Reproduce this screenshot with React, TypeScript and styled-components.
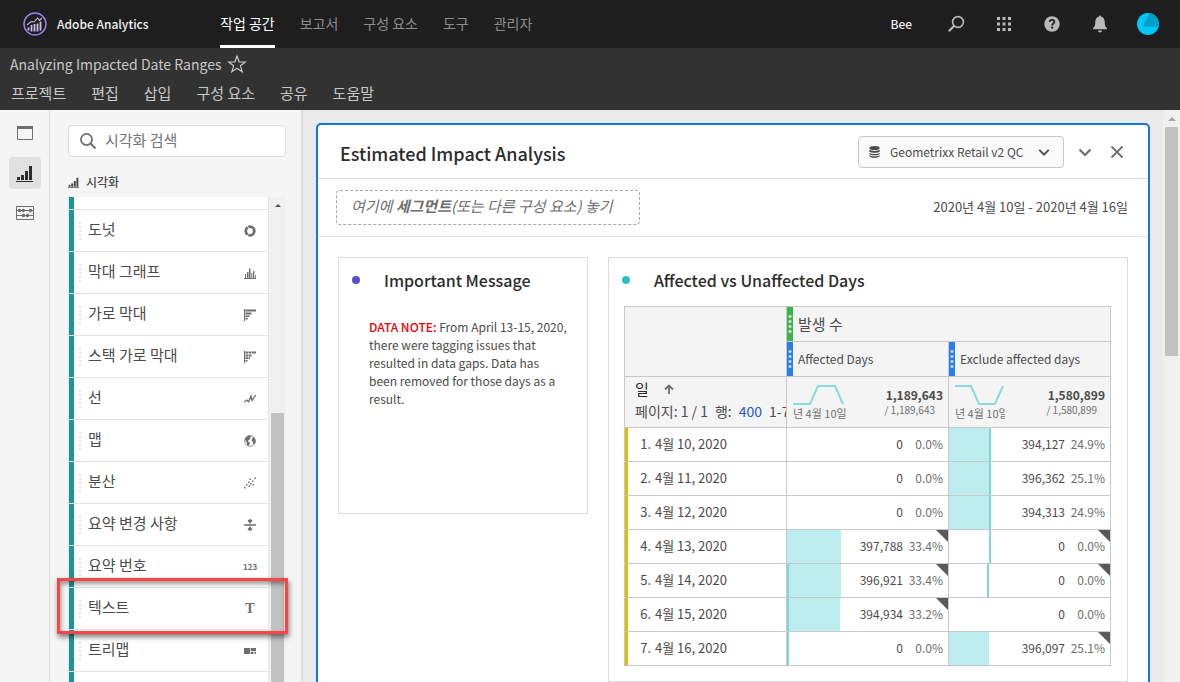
import React from "react";
import styled, { createGlobalStyle, css } from "styled-components";

const Global = createGlobalStyle`
  *, *::before, *::after { box-sizing: border-box; }
  body {
    margin: 0;
    background: #eaeaea;
    color: #4b4b4b;
    font-family: "Noto Sans CJK KR", "Noto Sans", sans-serif;
    font-size: 13px;
    line-height: 18px;
  }
  button, input, select { font: inherit; color: inherit; }
  button { border: 0; padding: 0; background: none; cursor: pointer; }
  h1, h2, h3, p, ul { margin: 0; padding: 0; }
  ul { list-style: none; }
  a { color: inherit; text-decoration: none; }
  svg { display: block; }
`;

const Page = styled.div`
  display: flex;
  flex-direction: column;
  height: 100vh;
  overflow: hidden;
`;

/* ---------- global header ---------- */
const TopBar = styled.header`
  display: flex;
  align-items: center;
  flex: none;
  height: 48px;
  padding: 0 8px 0 22px;
  background: #1e1e1e;
  color: #fff;
`;
const Brand = styled.a`
  display: flex;
  align-items: center;
  gap: 9px;
  width: 198px;
  font-size: 12px;
  font-weight: 500;
  color: #f0f0f0;
`;
const TopNav = styled.nav`
  display: flex;
  flex: 1;
  gap: 25px;
  align-self: stretch;
`;
const TopLink = styled.a<{ $active?: boolean }>`
  display: flex;
  align-items: center;
  padding-top: 1px;
  font-size: 14px;
  border-bottom: 3px solid ${(p) => (p.$active ? "#fff" : "transparent")};
  color: ${(p) => (p.$active ? "#fff" : "#8e8e8e")};
`;
const UserName = styled.span`
  margin-right: 20px;
  font-size: 12px;
  font-weight: 500;
  color: #f0f0f0;
`;
const TopButton = styled.button`
  display: grid;
  place-items: center;
  width: 48px;
  height: 48px;
  color: #b9b9b9;
`;

/* ---------- project bar ---------- */
const ProjectBar = styled.div`
  flex: none;
  height: 62px;
  background: #323232;
  color: #c8c8c8;
`;
const ProjectTitleRow = styled.div`
  display: flex;
  align-items: center;
  gap: 6px;
  height: 32px;
  padding-left: 10px;
`;
const ProjectTitle = styled.h1`
  font-size: 14px;
  font-weight: 400;
`;
const MenuBar = styled.nav`
  display: flex;
  align-items: center;
  gap: 25px;
  height: 26px;
  padding-left: 11px;
`;
const MenuButton = styled.button`
  font-size: 15px;
  line-height: 22px;
`;

/* ---------- body ---------- */
const Body = styled.div`
  display: flex;
  flex: 1;
  min-height: 0;
`;
const Rail = styled.nav`
  display: flex;
  flex: none;
  flex-direction: column;
  align-items: center;
  gap: 8px;
  width: 50px;
  padding-top: 7px;
  background: #f5f5f5;
  border-right: 1px solid #dcdcdc;
`;
const RailButton = styled.button<{ $active?: boolean }>`
  display: grid;
  place-items: center;
  width: 32px;
  height: 32px;
  border-radius: 4px;
  color: ${(p) => (p.$active ? "#2c2c2c" : "#6e6e6e")};
  background: ${(p) => (p.$active ? "#e1e1e1" : "transparent")};
`;
const SidePanel = styled.aside`
  flex: none;
  width: 253px;
  padding: 15px 15px 0 18px;
  background: #f5f5f5;
  border-right: 2px solid #dfdfdf;
`;
const SearchBox = styled.label`
  display: flex;
  align-items: center;
  gap: 8px;
  height: 32px;
  padding-left: 10px;
  background: #fff;
  border: 1px solid #dcdcdc;
  border-radius: 4px;
  color: #6e6e6e;
`;
const SearchInput = styled.input`
  flex: 1;
  min-width: 0;
  padding: 0 0 2px;
  border: 0;
  outline: 0;
  background: transparent;
  font-size: 15px;
  line-height: 22px;
  &::placeholder { color: #757575; opacity: 1; }
`;
const PanelHeading = styled.h2`
  display: flex;
  align-items: center;
  gap: 7px;
  height: 40px;
  padding-top: 10px;
  font-size: 12px;
  font-weight: 500;
`;
const ListArea = styled.div`
  display: flex;
  height: 100%;
  border-left: 1px solid #e6e6e6;
`;
const List = styled.ul`
  flex: 1;
  background: #fff;
  border-right: 1px solid #e6e6e6;
`;
const Item = styled.li<{ $partial?: boolean }>`
  position: relative;
  display: flex;
  align-items: center;
  height: ${(p) => (p.$partial ? 13 : 42)}px;
  padding: 0 11px 0 10px;
  border-bottom: 1px solid #e4e4e4;
  background: linear-gradient(#1b959a, #1b959a) 0 0 / 5px 100% no-repeat padding-box;
`;
const Grip = styled.span`
  width: 2px;
  height: 18px;
  margin-right: 7px;
  background: repeating-linear-gradient(#e1e1e1 0 2px, transparent 2px 4px);
`;
const ItemName = styled.span`
  flex: 1;
  padding-bottom: 4px;
  font-size: 15px;
  line-height: 22px;
`;
const ItemIcon = styled.span`
  display: grid;
  place-items: center;
  width: 14px;
  height: 14px;
  color: #6e6e6e;
`;
const Highlight = styled.span`
  position: absolute;
  z-index: 2;
  inset: -10px -20px -5px -12px;
  border: 3px solid #fb4444;
  box-shadow: 1px 3px 5px rgba(0, 0, 0, 0.5), inset 1px 3px 5px rgba(0, 0, 0, 0.4);
  pointer-events: none;
`;
const Scrollbar = styled.div<{ $gap: number }>`
  display: flex;
  flex: none;
  flex-direction: column;
  align-items: center;
  gap: ${(p) => p.$gap}px;
  width: 17px;
  padding-top: 7px;
  background: #f0f0f0;
  color: ${(p) => (p.$gap > 10 ? "#505050" : "#a3a3a3")};
`;
const Thumb = styled.div<{ $size: number }>`
  width: 13px;
  height: ${(p) => p.$size}px;
  background: #c1c1c1;
`;

/* ---------- canvas ---------- */
const Canvas = styled.main`
  flex: 1;
  min-width: 0;
  padding: 13px 13px 0;
  background: #eaeaea;
`;
const Panel = styled.section`
  min-height: 100%;
  background: #fff;
  border: 2px solid #1473e6;
  border-radius: 5px;
`;
const PanelHeader = styled.div`
  display: flex;
  align-items: center;
  height: 54px;
  padding: 0 24px 0 22px;
  border-bottom: 1px solid #dcdcdc;
`;
const PanelTitle = styled.h2`
  flex: 1;
  padding-top: 2px;
  font-size: 18px;
  font-weight: 500;
  color: #2c2c2c;
`;
const SuitePicker = styled.label`
  display: flex;
  align-items: center;
  gap: 10px;
  height: 32px;
  padding: 0 13px 0 10px;
  border: 1px solid #c8c8c8;
  border-radius: 4px;
  background: #fafafa;
`;
const SuiteSelect = styled.select`
  width: 138px;
  padding: 0;
  border: 0;
  outline: 0;
  appearance: none;
  background: transparent;
  font-size: 12px;
`;
const PanelTools = styled.div`
  display: flex;
  gap: 18px;
  margin-left: 14px;
`;
const ToolButton = styled.button`
  color: #6e6e6e;
`;
const FilterRow = styled.div`
  display: flex;
  align-items: center;
  justify-content: space-between;
  height: 58px;
  padding: 0 20px 0 18px;
  border-bottom: 1px solid #e4e4e4;
`;
const DropZone = styled.div`
  width: 304px;
  height: 35px;
  padding: 4px 14px;
  border: 1px dashed #a8a8a8;
  border-radius: 4px;
  font-size: 15px;
  line-height: 22px;
  font-style: italic;
  white-space: nowrap;
  color: #6e6e6e;
`;
const DateRange = styled.button`
  padding-bottom: 2px;
`;
const Boards = styled.div`
  display: flex;
  align-items: flex-start;
  gap: 20px;
  padding: 20px;
`;
const Board = styled.article<{ $wide?: boolean }>`
  ${(p) =>
    p.$wide
      ? css`flex: 1; min-width: 0;`
      : css`flex: none; width: 250px; min-height: 257px;`}
  border: 1px solid #dcdcdc;
`;
const BoardTitle = styled.h3<{ $dot: string }>`
  display: flex;
  align-items: center;
  gap: 24px;
  height: 48px;
  padding: 0 0 4px 13px;
  font-size: 16px;
  font-weight: 500;
  color: #2c2c2c;
  &::before {
    content: "";
    width: 8px;
    height: 8px;
    border-radius: 50%;
    background: ${(p) => p.$dot};
  }
`;
const TableArea = styled.div`
  padding: 0 16px 15px 15px;
`;
const Note = styled.p`
  padding: 12px 18px 0 30px;
  font-size: 12px;
`;
const NoteFlag = styled.strong`
  font-weight: 500;
  color: #f00000;
`;

/* ---------- data table ---------- */
const line = "1px solid #c8c8c8";
const Table = styled.table`
  width: 100%;
  table-layout: fixed;
  border-collapse: separate;
  border-spacing: 0;
  border-top: ${line};
  border-left: ${line};
`;
const cell = css`
  padding: 0;
  border-right: ${line};
  border-bottom: ${line};
  font-weight: 400;
  text-align: left;
`;
const HeadCell = styled.th<{ $tall?: boolean }>`
  ${cell}
  height: ${(p) => (p.$tall ? 51 : 35)}px;
  background: #f4f4f4;
`;
const HeadLabel = styled.div<{ $bar: string; $large?: boolean }>`
  display: flex;
  align-items: center;
  gap: 5px;
  height: 34px;
  font-size: ${(p) => (p.$large ? 15 : 12)}px;
  &::before {
    content: "";
    width: 6px;
    height: 100%;
    background:
      radial-gradient(circle, rgba(255, 255, 255, 0.7) 1px, transparent 2px) 1px 0 / 4px 5px repeat-y content-box,
      ${(p) => p.$bar};
    padding: 7px 0;
  }
`;
const Dimension = styled.div`
  height: 50px;
  padding: 1px 0 0 10px;
  overflow: hidden;
  white-space: nowrap;
`;
const DimensionName = styled.div`
  display: flex;
  align-items: center;
  gap: 15px;
  font-size: 15px;
  line-height: 22px;
  color: #2c2c2c;
`;
const Paging = styled.div`
  display: flex;
  gap: 7px;
  font-size: 14px;
  line-height: 22px;
`;
const RowCount = styled.a`
  color: #2558c8;
`;
const Summary = styled.div`
  display: flex;
  justify-content: space-between;
  padding: 5px 5px 0 6px;
  height: 50px;
`;
const Trend = styled.div<{ $width: number }>`
  width: ${(p) => p.$width}px;
  overflow: hidden;
  white-space: nowrap;
  font-size: 11px;
  line-height: 16px;
  color: #6e6e6e;
`;
const Totals = styled.div`
  padding-top: 5px;
  text-align: right;
  font-size: 12px;
  line-height: 15px;
`;
const GrandTotal = styled.div`
  padding-right: 8px;
  font-size: 10px;
  color: #6e6e6e;
`;
const RowHead = styled.th`
  ${cell}
  height: 34px;
`;
const RowLabel = styled.div`
  display: flex;
  align-items: center;
  gap: 4px;
  height: 33px;
  padding-bottom: 2px;
  border-left: 3px solid #dcbf00;
`;
const RowIndex = styled.span`
  width: 23px;
  text-align: right;
`;
const DataCell = styled.td`
  ${cell}
  height: 34px;
`;
const Metric = styled.div`
  position: relative;
  display: flex;
  align-items: center;
  justify-content: flex-end;
  height: 33px;
  padding: 0 5px 2px 0;
  font-size: 12px;
`;
const Fill = styled.span`
  position: absolute;
  inset: 0 auto 0 0;
  background: #bdecee;
`;
const Marker = styled.span`
  position: absolute;
  top: 0;
  bottom: 0;
  width: 2px;
  background: #7dd6da;
`;
const Corner = styled.span`
  position: absolute;
  top: 0;
  right: 0;
  border: 6px solid transparent;
  border-top-color: #5a5a5a;
  border-right-color: #5a5a5a;
`;
const Percent = styled.span`
  width: 40px;
  text-align: right;
  color: #6e6e6e;
`;

/* ---------- icons ---------- */
const Logo = () => (
  <svg width="26" height="26" viewBox="0 0 26 26" fill="none" aria-hidden="true">
    <circle cx="13" cy="13" r="11" stroke="#9a7ff0" strokeWidth="1.5" />
    <path d="M6.500 16.500v3M9.500 14v6.500M12.500 13v7.500M15.500 12.500v8M18.500 10.500v9" stroke="#c9bde8" strokeWidth="1.800" />
    <path d="M5 14l4-3.500 3 .5 3.500-4 2 2.500L20 7" stroke="#c9bde8" strokeWidth="1.100" />
  </svg>
);
const Magnifier = ({ flip }: { flip?: boolean }) => (
  <svg width="18" height="18" viewBox="0 0 18 18" fill="none" stroke="currentColor" aria-hidden="true">
    {flip ? (
      <>
        <circle cx="11" cy="7" r="5.400" strokeWidth="1.600" />
        <path d="M7.300 10.700L1.800 16.200" strokeWidth="2.200" />
      </>
    ) : (
      <>
        <circle cx="7.500" cy="7.500" r="5.600" strokeWidth="1.700" />
        <path d="M11.500 11.500l5 5" strokeWidth="2" />
      </>
    )}
  </svg>
);
const Apps = () => (
  <svg width="14" height="14" viewBox="0 0 14 14" fill="currentColor" aria-hidden="true">
    {[0, 5.5, 11].map((y) => [0, 5.5, 11].map((x) => <rect key={`${x}-${y}`} x={x} y={y} width="3" height="3" />))}
  </svg>
);
const Help = () => (
  <svg width="16" height="16" viewBox="0 0 16 16" aria-hidden="true">
    <circle cx="8" cy="8" r="7.700" fill="currentColor" />
    <path d="M5.600 5.800C5.800 4.500 6.700 3.900 8 3.900c1.500 0 2.400.8 2.400 1.900 0 1.700-2.200 1.800-2.200 3.600" fill="none" stroke="#1e1e1e" strokeWidth="1.800" />
    <rect x="7.200" y="10.600" width="2" height="2" fill="#1e1e1e" />
  </svg>
);
const Bell = () => (
  <svg width="16" height="18" viewBox="0 0 16 18" fill="currentColor" aria-hidden="true">
    <path d="M7 1.500a1 1 0 0 1 2 0c2.500.6 3.700 2.700 3.700 5.200 0 3.800.8 5.300 2.300 6.300v1.200H1V13c1.500-1 2.300-2.500 2.300-6.300C3.300 4.200 4.500 2.100 7 1.500zM6 15.500h4a2 2 0 0 1-4 0z" />
  </svg>
);
const Avatar = () => (
  <svg width="22" height="22" viewBox="0 0 22 22" aria-hidden="true">
    <circle cx="11" cy="11" r="11" fill="#00c8fa" />
    <path d="M12 0.500A11 11 0 0 1 21.500 14L6 13.500z" fill="#00a0cc" />
  </svg>
);
const Star = () => (
  <svg width="20" height="20" viewBox="0 0 20 20" fill="none" stroke="currentColor" strokeWidth="1.200" aria-hidden="true">
    <path d="M10 2l2.100 5.800 6.200.2-4.900 3.800 1.800 6L10 14.300l-5.200 3.500 1.800-6L1.700 8l6.200-.2z" />
  </svg>
);
const WindowIcon = () => (
  <svg width="16" height="14" viewBox="0 0 16 14" aria-hidden="true">
    <path d="M.5.500h15v13H.5z" fill="none" stroke="currentColor" />
    <path d="M0 0h16v3H0z" fill="currentColor" />
  </svg>
);
const ChartIcon = ({ size = 17 }: { size?: number }) => (
  <svg width={size} height={size} viewBox="0 0 17 17" fill="currentColor" aria-hidden="true">
    <path d="M0 16h17v1H0zM1 12h3v3H1zM5 10h3v5H5zM9 6h3v9H9zM13 1h3v14h-3z" />
  </svg>
);
const Abacus = () => (
  <svg width="18" height="14" viewBox="0 0 18 14" fill="none" stroke="currentColor" aria-hidden="true">
    <path d="M.5.500h17v13H.5zM0 4.500h18M0 9.500h18" />
    <g fill="currentColor" stroke="none">
      <circle cx="3.500" cy="4.500" r="1.800" />
      <circle cx="7.300" cy="4.500" r="1.800" />
      <circle cx="14.500" cy="4.500" r="1.800" />
      <circle cx="7.500" cy="9.500" r="1.800" />
      <circle cx="11.500" cy="9.500" r="1.800" />
    </g>
  </svg>
);
const Database = () => (
  <svg width="11" height="12" viewBox="0 0 11 12" fill="currentColor" aria-hidden="true">
    <ellipse cx="5.500" cy="2" rx="5.200" ry="2" />
    <path d="M.2 3.800c2 1.500 8.600 1.500 10.600 0v1.500c-1 2-9.600 2-10.600 0zM.2 6.900c2 1.500 8.600 1.500 10.600 0v.9c-1 2-9.600 2-10.600 0zM.2 9.200c2 1.500 8.600 1.500 10.600 0v.8c-1 2.400-9.600 2.400-10.600 0z" />
  </svg>
);
const Chevron = ({ width = 14 }: { width?: number }) => (
  <svg width={width} height={width} viewBox="0 0 14 14" fill="none" stroke="currentColor" strokeWidth="2.200" aria-hidden="true">
    <path d="M1.500 4.500L7 10l5.500-5.500" />
  </svg>
);
const Close = () => (
  <svg width="14" height="14" viewBox="0 0 14 14" fill="none" stroke="currentColor" strokeWidth="1.800" aria-hidden="true">
    <path d="M1.500 1.500l11 11M12.500 1.500l-11 11" />
  </svg>
);
const ArrowUp = () => (
  <svg width="10" height="10" viewBox="0 0 10 10" fill="none" stroke="#6e6e6e" strokeWidth="1.800" aria-hidden="true">
    <path d="M5 10V1.500M1 5.500l4-4 4 4" />
  </svg>
);
const Triangle = () => (
  <svg width="8" height="4" viewBox="0 0 8 4" fill="currentColor" aria-hidden="true">
    <path d="M0 4l4-4 4 4z" />
  </svg>
);

const shapes: Record<string, React.ReactNode> = {
  donut: <circle cx="6" cy="6" r="4.300" fill="none" stroke="currentColor" strokeWidth="2.800" strokeDasharray="8.300 .7" />,
  bars: <path d="M1 11V7h1v4zM3 11V5h1.500v6zM5 11V1.500h1.500V11zM7.300 11V6h1v5zM9 11V4h1.300v7zM11 11V8h.8v3zM0 11h12v1H0z" />,
  hbars: <path d="M0 0h1.200v12H0zM1.600.500H12v2H1.600zM1.600 3.500H7.500v2H1.600zM1.600 6.500h4v1.500h-4zM1.600 9h2.200v1.500H1.600z" />,
  stacked: <path d="M0 0h1.200v12H0zM1.600.500H4v2H1.600zM4.500.500H7v2H4.500zM7.500.500H12v2H7.500zM1.600 3.500H4v2H1.600zM4.500 3.500H7.500v2H4.500zM1.600 6.300H4v1.800H1.600zM4.500 6.300h1.600v1.800H4.500zM1.600 9h2v1.500h-2z" />,
  line: <path d="M.3 9l2.500-2 1.800 1.800L7 3l1 4.500L11.700 2" fill="none" stroke="currentColor" strokeWidth="1.300" />,
  map: (
    <>
      <circle cx="6" cy="6" r="5.400" fill="none" stroke="currentColor" strokeWidth=".7" />
      <path d="M.8 4.500C1.500 2 3.500.700 6 .600L7.500 1.500 6 2.500 6.500 4 4.500 5 4 6.500 6 7.500 5.500 9 4.500 11 3 10 2.800 7.500zM8.500 2.500L10 2.200 11.400 5v2.500L10 9.800 9 8.500V7L7.500 6 8 4.300z" />
    </>
  ),
  scatter: <path d="M0 10h1.500v1.500H0zM2 7h1.500v1.500H2zM4.500 8.500H6V10H4.500zM4 4.500h1.500V6H4zM6 6h1.500v1.500H6zM8 3.500h1.500V5H8zM10.500.500H12V2h-1.500zM5.500 1.500H7V3H5.500zM8.500 7H10v1.500H8.500z" />,
  change: <path d="M0 5.300h12v1.500H0zM5.300 3h1.500v1.500H5.300zM6 0l2.200 1.200v1L6.800 3.500H5.200L3.800 2.200v-1zM5.300 7.500h1.500V9H5.300zM3.800 9.700l1.400-1.200h1.600l1.400 1.200v1L6 12l-2.200-1.300z" />,
  treemap: <path d="M0 3h6v6H0zM6.700 3H12v3.300H6.700zM6.700 7H9v2H6.700zM9.600 7h.9v2h-.9zM11.100 7h.9v2h-.9z" />,
};
const Glyph = ({ name }: { name: string }) => (
  <svg width="12" height="12" viewBox="0 0 12 12" fill="currentColor" aria-hidden="true">
    {shapes[name]}
  </svg>
);
const NumberGlyph = styled.span`
  font-size: 8px;
  font-weight: 700;
  line-height: 10px;
`;
const LetterGlyph = styled.span`
  font-family: "Liberation Serif", serif;
  font-size: 14px;
  font-weight: 700;
  line-height: 14px;
`;

/* ---------- data ---------- */
const items: { name: string; icon: React.ReactNode; marked?: boolean }[] = [
  { name: "도넛", icon: <Glyph name="donut" /> },
  { name: "막대 그래프", icon: <Glyph name="bars" /> },
  { name: "가로 막대", icon: <Glyph name="hbars" /> },
  { name: "스택 가로 막대", icon: <Glyph name="stacked" /> },
  { name: "선", icon: <Glyph name="line" /> },
  { name: "맵", icon: <Glyph name="map" /> },
  { name: "분산", icon: <Glyph name="scatter" /> },
  { name: "요약 변경 사항", icon: <Glyph name="change" /> },
  { name: "요약 번호", icon: <NumberGlyph>123</NumberGlyph> },
  { name: "텍스트", icon: <LetterGlyph>T</LetterGlyph>, marked: true },
  { name: "트리맵", icon: <Glyph name="treemap" /> },
];

type Value = { value: string; percent: string; fill?: number; marker?: number; flagged?: boolean };
const none = { value: "0", percent: "0.0%" };
const rows: { day: string; cells: Value[] }[] = [
  { day: "4월 10, 2020", cells: [none, { value: "394,127", percent: "24.9%", fill: 41, marker: 40 }] },
  { day: "4월 11, 2020", cells: [none, { value: "396,362", percent: "25.1%", fill: 41, marker: 40 }] },
  { day: "4월 12, 2020", cells: [none, { value: "394,313", percent: "24.9%", fill: 41, marker: 40 }] },
  { day: "4월 13, 2020", cells: [{ value: "397,788", percent: "33.4%", fill: 54, flagged: true }, { ...none, marker: 40, flagged: true }] },
  { day: "4월 14, 2020", cells: [{ value: "396,921", percent: "33.4%", fill: 54, marker: 0, flagged: true }, { ...none, marker: 38, flagged: true }] },
  { day: "4월 15, 2020", cells: [{ value: "394,934", percent: "33.2%", fill: 53, marker: 0, flagged: true }, none] },
  { day: "4월 16, 2020", cells: [{ ...none, marker: 0 }, { value: "396,097", percent: "25.1%", fill: 40, flagged: true }] },
];

const MetricSummary = ({ path, total, width }: { path: string; total: string; width: number }) => (
  <Summary>
    <Trend $width={width}>
      <svg width="52" height="23" viewBox="0 0 52 23" fill="none" stroke="#8adada" strokeWidth="2" aria-hidden="true">
        <path d={path} />
      </svg>
      년 4월 10일
    </Trend>
    <Totals>
      <strong>{total}</strong>
      <GrandTotal>/ {total}</GrandTotal>
    </Totals>
  </Summary>
);

export default function App() {
  return (
    <>
      <Global />
      <Page>
        <TopBar>
          <Brand href="#home"><Logo />Adobe Analytics</Brand>
          <TopNav>
            <TopLink href="#workspace" $active>작업 공간</TopLink>
            <TopLink href="#reports">보고서</TopLink>
            <TopLink href="#components">구성 요소</TopLink>
            <TopLink href="#tools">도구</TopLink>
            <TopLink href="#admin">관리자</TopLink>
          </TopNav>
          <UserName>Bee</UserName>
          <TopButton aria-label="검색"><Magnifier flip /></TopButton>
          <TopButton aria-label="앱"><Apps /></TopButton>
          <TopButton aria-label="도움말"><Help /></TopButton>
          <TopButton aria-label="알림"><Bell /></TopButton>
          <TopButton aria-label="계정"><Avatar /></TopButton>
        </TopBar>

        <ProjectBar>
          <ProjectTitleRow>
            <ProjectTitle>Analyzing Impacted Date Ranges</ProjectTitle>
            <button aria-label="즐겨찾기"><Star /></button>
          </ProjectTitleRow>
          <MenuBar>
            {["프로젝트", "편집", "삽입", "구성 요소", "공유", "도움말"].map((m) => (
              <MenuButton key={m}>{m}</MenuButton>
            ))}
          </MenuBar>
        </ProjectBar>

        <Body>
          <Rail>
            <RailButton aria-label="패널"><WindowIcon /></RailButton>
            <RailButton aria-label="시각화" $active><ChartIcon /></RailButton>
            <RailButton aria-label="구성 요소"><Abacus /></RailButton>
          </Rail>

          <SidePanel>
            <SearchBox>
              <Magnifier />
              <SearchInput type="text" placeholder="시각화 검색" aria-label="시각화 검색" />
            </SearchBox>
            <PanelHeading><ChartIcon size={11} />시각화</PanelHeading>
            <ListArea>
              <List>
                <Item $partial />
                {items.map((item) => (
                  <Item key={item.name}>
                    <Grip />
                    <ItemName>{item.name}</ItemName>
                    <ItemIcon>{item.icon}</ItemIcon>
                    {item.marked && <Highlight />}
                  </Item>
                ))}
                <Item />
              </List>
              <Scrollbar $gap={206} aria-hidden="true"><Triangle /><Thumb $size={400} /></Scrollbar>
            </ListArea>
          </SidePanel>

          <Canvas>
            <Panel>
              <PanelHeader>
                <PanelTitle>Estimated Impact Analysis</PanelTitle>
                <SuitePicker>
                  <Database />
                  <SuiteSelect aria-label="보고서 세트">
                    <option>Geometrixx Retail v2 QC</option>
                  </SuiteSelect>
                  <Chevron width={12} />
                </SuitePicker>
                <PanelTools>
                  <ToolButton aria-label="접기"><Chevron /></ToolButton>
                  <ToolButton aria-label="닫기"><Close /></ToolButton>
                </PanelTools>
              </PanelHeader>
              <FilterRow>
                <DropZone>여기에 <strong>세그먼트</strong>(또는 다른 구성 요소) 놓기</DropZone>
                <DateRange>2020년 4월 10일 - 2020년 4월 16일</DateRange>
              </FilterRow>
              <Boards>
                <Board>
                  <BoardTitle $dot="#5151d3">Important Message</BoardTitle>
                  <Note>
                    <NoteFlag>DATA NOTE:</NoteFlag> From April 13-15, 2020, there were tagging issues that resulted in data
                    gaps. Data has been removed for those days as a result.
                  </Note>
                </Board>
                <Board $wide>
                  <BoardTitle $dot="#26c0c7">Affected vs Unaffected Days</BoardTitle>
                  <TableArea>
                    <Table>
                      <thead>
                        <tr>
                          <HeadCell rowSpan={2} />
                          <HeadCell colSpan={2} scope="colgroup">
                            <HeadLabel $bar="#3db34f" $large>발생 수</HeadLabel>
                          </HeadCell>
                        </tr>
                        <tr>
                          <HeadCell scope="col"><HeadLabel $bar="#2680eb">Affected Days</HeadLabel></HeadCell>
                          <HeadCell scope="col"><HeadLabel $bar="#2680eb">Exclude affected days</HeadLabel></HeadCell>
                        </tr>
                        <tr>
                          <HeadCell $tall>
                            <Dimension>
                              <DimensionName>일<ArrowUp /></DimensionName>
                              <Paging>
                                <span>페이지: 1 / 1</span>
                                <span>행:</span>
                                <RowCount href="#rows">400</RowCount>
                                <span>1-7</span>
                              </Paging>
                            </Dimension>
                          </HeadCell>
                          <HeadCell $tall>
                            <MetricSummary path="M0 22H17L25 4H42L50 22" total="1,189,643" width={53} />
                          </HeadCell>
                          <HeadCell $tall>
                            <MetricSummary path="M0 4H16L24 22H40L48 4" total="1,580,899" width={50} />
                          </HeadCell>
                        </tr>
                      </thead>
                      <tbody>
                        {rows.map((row, i) => (
                          <tr key={row.day}>
                            <RowHead scope="row">
                              <RowLabel><RowIndex>{i + 1}.</RowIndex>{row.day}</RowLabel>
                            </RowHead>
                            {row.cells.map((c, j) => (
                              <DataCell key={j}>
                                <Metric>
                                  {c.fill !== undefined && <Fill style={{ width: c.fill }} />}
                                  {c.marker !== undefined && <Marker style={{ left: c.marker }} />}
                                  {c.flagged && <Corner />}
                                  {c.value}
                                  <Percent>{c.percent}</Percent>
                                </Metric>
                              </DataCell>
                            ))}
                          </tr>
                        ))}
                      </tbody>
                    </Table>
                  </TableArea>
                </Board>
              </Boards>
            </Panel>
          </Canvas>
          <Scrollbar $gap={6} aria-hidden="true"><Triangle /><Thumb $size={229} /></Scrollbar>
        </Body>
      </Page>
    </>
  );
}
